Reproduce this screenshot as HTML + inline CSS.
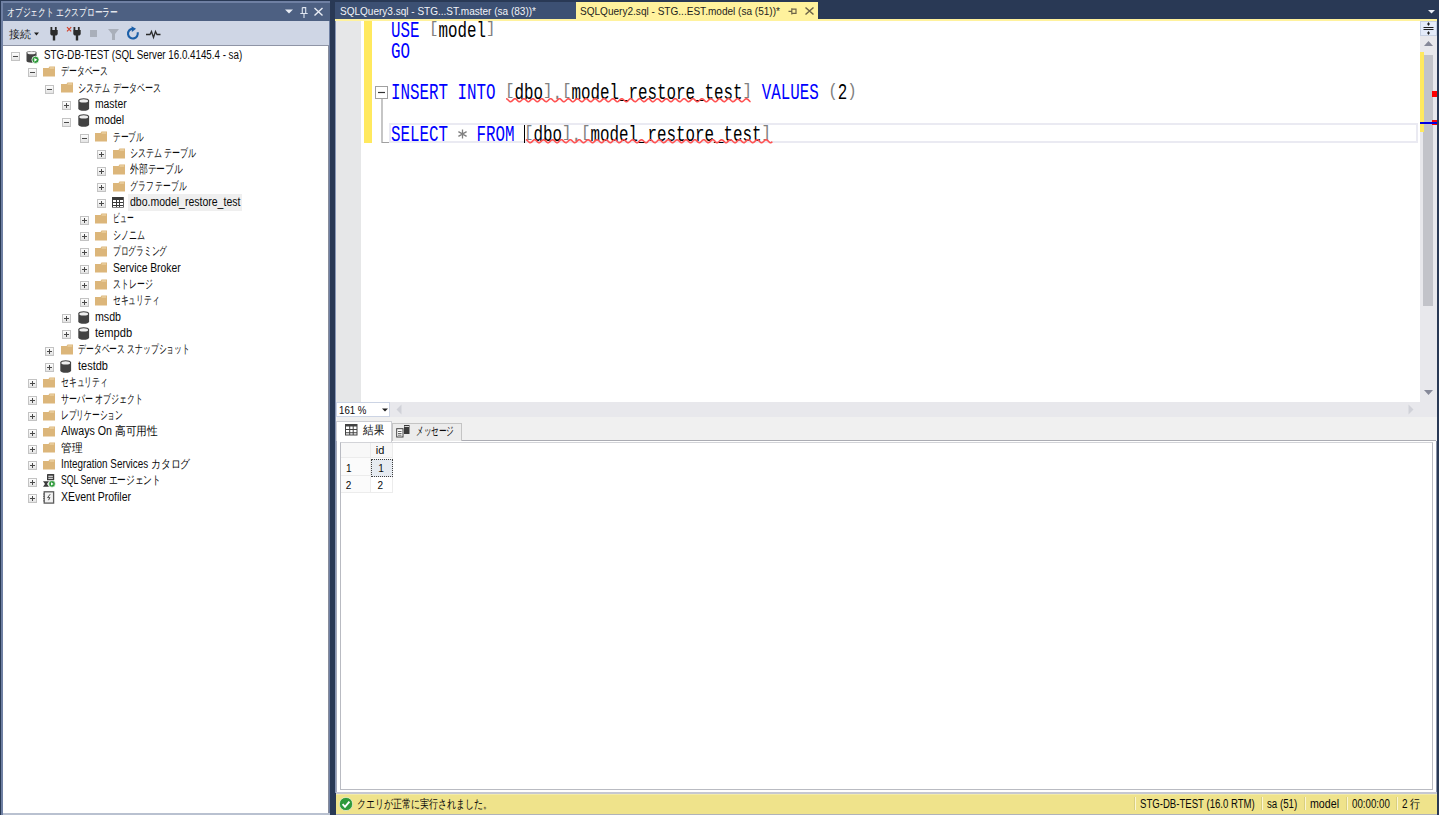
<!DOCTYPE html><html lang="ja"><head><meta charset="utf-8"><title>SSMS</title><style>
*{margin:0;padding:0;box-sizing:border-box}
html,body{width:1439px;height:815px;overflow:hidden}
body{position:relative;background:#293955;font-family:"Liberation Sans",sans-serif;color:#0a0a0a}
.a{position:absolute}
.lbl{position:absolute;white-space:nowrap;font-size:12px;line-height:16px;transform-origin:0 50%}
.code{position:absolute;left:390.5px;white-space:pre;font-family:"Liberation Mono",monospace;font-size:25px;line-height:25px;transform:scale(0.63333,0.9);transform-origin:0 0;color:#000}
.kw{color:#0000ff}.gy{color:#808080}.br{display:inline-block;transform:scaleY(.74);transform-origin:50% 0}.pa{display:inline-block;transform:scaleY(.81);transform-origin:50% 0}
.exp{position:absolute;width:9px;height:9px;border:1px solid #c3c3c3;background:linear-gradient(#fdfdfd,#e4e4e4)}
.exp:before{content:"";position:absolute;left:1px;top:3px;width:5px;height:1px;background:#4a4a4a}
.exp.p:after{content:"";position:absolute;left:3px;top:1px;width:1px;height:5px;background:#4a4a4a}
.sep{position:absolute;top:797px;width:2px;height:13px;border-left:1px solid #d9cf80;border-right:1px solid #fbf6d4}
</style></head><body>
<div class="a" style="left:1px;top:1px;width:329px;height:814px;background:#6f80a3"></div>
<div class="a" style="left:3px;top:3px;width:327px;height:18px;background:#4d6082"></div>
<div class="lbl" id="title" style="left:7px;top:4px;color:#fff;font-size:11px;transform:scaleX(0.7067)">オブジェクト エクスプローラー</div>
<svg class="a" style="left:284px;top:5px" width="42" height="14" viewBox="0 0 42 14"><path d="M1 4.5h8l-4 4z" fill="#e8ecf4"/><path d="M18.3 2.6h3.4v5.6" stroke="#dfe5f0" stroke-width="1.1" fill="none"/><path d="M18.3 2.6v5.6M16.3 8.5h7.4M20 8.5v4.5" stroke="#dfe5f0" stroke-width="1.1" fill="none"/><path d="M30.5 3l8 7.5M38.5 3l-8 7.5" stroke="#e8ecf4" stroke-width="1.4"/></svg>
<div class="a" style="left:3px;top:21px;width:326px;height:24px;background:#cfd6e5"></div>
<div class="a" style="left:3px;top:45px;width:326px;height:1px;background:#8f95a6"></div>
<div class="lbl" style="left:9px;top:26px;font-size:11px;color:#1e1e1e">接続</div>
<svg class="a" style="left:30px;top:26px" width="135" height="16" viewBox="0 0 135 16"><path d="M4 6.5h5l-2.5 3z" fill="#1e1e1e"/><path d="M20.5 1h1.8v3h2.6V1h1.8v3h1v4.2l-1.2 1.3h-1.3v5h-2.4v-5h-1.3l-1.2-1.3V4h0.2z" fill="#2b2b2b"/><path d="M37 1.2l4.2 4.2M41.2 1.2L37 5.4" stroke="#d2402a" stroke-width="1.2"/><path d="M43.5 1h1.8v3h2.6V1h1.8v3h1v4.2l-1.2 1.3h-1.3v5h-2.4v-5h-1.3l-1.2-1.3V4h0.2z" fill="#2b2b2b"/><rect x="60" y="4" width="7" height="7" fill="#a9afba"/><path d="M78 3h11l-4 5v6h-3V8z" fill="#a9afba"/><path d="M107.6 6.2A4.9 4.9 0 1 1 102.6 2.7" stroke="#1b5fa8" stroke-width="2.1" fill="none"/><path d="M101.5 0.2l4.6 2.6-4.2 3.2z" fill="#1b5fa8"/><path d="M116 8.5h4l1.5-3 2 6 2-6 1.5 3h3.5" stroke="#2b2b2b" stroke-width="1.3" fill="none"/></svg>
<div class="a" style="left:3px;top:46px;width:325px;height:767px;background:#fff"></div>
<div class="a" style="left:328px;top:46px;width:1px;height:769px;background:#868b9b"></div>
<div class="a" style="left:3px;top:813px;width:327px;height:2px;background:#b9c1d0"></div>
<div class="exp" style="left:10.5px;top:52.0px"></div>
<svg class="a" style="left:26.0px;top:49.5px" width="14" height="14" viewBox="0 0 14 14"><path d="M0.5 2.5C0.5 0.5 10.5 0.5 10.5 2.5V11C10.5 13.2 0.5 13.2 0.5 11z" fill="#424242"/><ellipse cx="5.5" cy="2.7" rx="4.2" ry="1.5" fill="#efefef"/><circle cx="9.5" cy="9.8" r="3.6" fill="#2e9a3a" stroke="#fff" stroke-width="0.8"/><path d="M8.3 7.9v3.8l3-1.9z" fill="#fff"/></svg>
<div class="lbl" id="t0" style="left:43.5px;top:46.7px;transform:scaleX(0.8142)">STG-DB-TEST (SQL Server 16.0.4145.4 - sa)</div>
<div class="exp" style="left:27.8px;top:68.4px"></div>
<svg class="a" style="left:43.3px;top:65.9px" width="13" height="11" viewBox="0 0 13 11"><path d="M0 2h5.5l1-1.5h5.5v10H0z" fill="#dcb67a"/><path d="M6.8 1.6h4.4v0.9H6.5z" fill="#f1dcb2"/></svg>
<div class="lbl" id="t1" style="left:60.8px;top:63.1px;transform:scaleX(0.6556)">データベース</div>
<div class="exp" style="left:45.1px;top:84.7px"></div>
<svg class="a" style="left:60.6px;top:82.2px" width="13" height="11" viewBox="0 0 13 11"><path d="M0 2h5.5l1-1.5h5.5v10H0z" fill="#dcb67a"/><path d="M6.8 1.6h4.4v0.9H6.5z" fill="#f1dcb2"/></svg>
<div class="lbl" id="t2" style="left:78.1px;top:79.5px;transform:scaleX(0.6753)">システム データベース</div>
<div class="exp p" style="left:62.4px;top:101.1px"></div>
<svg class="a" style="left:77.6px;top:98.0px" width="12" height="13" viewBox="0 0 12 13"><path d="M0.3 2.6C0.3 -0.5 11.1 -0.5 11.1 2.6V10.4C11.1 13.5 0.3 13.5 0.3 10.4z" fill="#424242"/><ellipse cx="5.7" cy="2.9" rx="4.4" ry="1.7" fill="#efefef"/></svg>
<div class="lbl" id="t3" style="left:95.4px;top:95.8px;transform:scaleX(0.8613)">master</div>
<div class="exp" style="left:62.4px;top:117.5px"></div>
<svg class="a" style="left:77.6px;top:114.4px" width="12" height="13" viewBox="0 0 12 13"><path d="M0.3 2.6C0.3 -0.5 11.1 -0.5 11.1 2.6V10.4C11.1 13.5 0.3 13.5 0.3 10.4z" fill="#424242"/><ellipse cx="5.7" cy="2.9" rx="4.4" ry="1.7" fill="#efefef"/></svg>
<div class="lbl" id="t4" style="left:95.4px;top:112.2px;transform:scaleX(0.8933)">model</div>
<div class="exp" style="left:79.7px;top:133.9px"></div>
<svg class="a" style="left:95.2px;top:131.4px" width="13" height="11" viewBox="0 0 13 11"><path d="M0 2h5.5l1-1.5h5.5v10H0z" fill="#dcb67a"/><path d="M6.8 1.6h4.4v0.9H6.5z" fill="#f1dcb2"/></svg>
<div class="lbl" id="t5" style="left:112.7px;top:128.6px;transform:scaleX(0.6417)">テーブル</div>
<div class="exp p" style="left:97.0px;top:150.2px"></div>
<svg class="a" style="left:112.5px;top:147.7px" width="13" height="11" viewBox="0 0 13 11"><path d="M0 2h5.5l1-1.5h5.5v10H0z" fill="#dcb67a"/><path d="M6.8 1.6h4.4v0.9H6.5z" fill="#f1dcb2"/></svg>
<div class="lbl" id="t6" style="left:130.0px;top:145.0px;transform:scaleX(0.6674)">システム テーブル</div>
<div class="exp p" style="left:97.0px;top:166.6px"></div>
<svg class="a" style="left:112.5px;top:164.1px" width="13" height="11" viewBox="0 0 13 11"><path d="M0 2h5.5l1-1.5h5.5v10H0z" fill="#dcb67a"/><path d="M6.8 1.6h4.4v0.9H6.5z" fill="#f1dcb2"/></svg>
<div class="lbl" id="t7" style="left:130.0px;top:161.3px;transform:scaleX(0.7333)">外部テーブル</div>
<div class="exp p" style="left:97.0px;top:183.0px"></div>
<svg class="a" style="left:112.5px;top:180.5px" width="13" height="11" viewBox="0 0 13 11"><path d="M0 2h5.5l1-1.5h5.5v10H0z" fill="#dcb67a"/><path d="M6.8 1.6h4.4v0.9H6.5z" fill="#f1dcb2"/></svg>
<div class="lbl" id="t8" style="left:130.0px;top:177.7px;transform:scaleX(0.6469)">グラフ テーブル</div>
<div class="exp p" style="left:97.0px;top:199.3px"></div>
<svg class="a" style="left:111.9px;top:197.3px" width="12" height="11" viewBox="0 0 12 11"><rect x="0" y="0" width="11.8" height="10.6" fill="#3a3a3a"/><path d="M1 3h3v2H1zM5 3h2v2H5zM8 3h3v2H8zM1 6h3v2H1zM5 6h2v2H5zM8 6h3v2H8zM1 9h3v1H1zM5 9h2v1H5zM8 9h3v1H8z" fill="#fff"/></svg>
<div class="a" style="left:128.0px;top:193.8px;width:113.6px;height:16.8px;background:#efefef"></div>
<div class="lbl" id="t9" style="left:130.0px;top:194.1px;transform:scaleX(0.8756)">dbo.model_restore_test</div>
<div class="exp p" style="left:79.7px;top:215.7px"></div>
<svg class="a" style="left:95.2px;top:213.2px" width="13" height="11" viewBox="0 0 13 11"><path d="M0 2h5.5l1-1.5h5.5v10H0z" fill="#dcb67a"/><path d="M6.8 1.6h4.4v0.9H6.5z" fill="#f1dcb2"/></svg>
<div class="lbl" id="t10" style="left:112.7px;top:210.4px;transform:scaleX(0.5639)">ビュー</div>
<div class="exp p" style="left:79.7px;top:232.1px"></div>
<svg class="a" style="left:95.2px;top:229.6px" width="13" height="11" viewBox="0 0 13 11"><path d="M0 2h5.5l1-1.5h5.5v10H0z" fill="#dcb67a"/><path d="M6.8 1.6h4.4v0.9H6.5z" fill="#f1dcb2"/></svg>
<div class="lbl" id="t11" style="left:112.7px;top:226.8px;transform:scaleX(0.6667)">シノニム</div>
<div class="exp p" style="left:79.7px;top:248.4px"></div>
<svg class="a" style="left:95.2px;top:245.9px" width="13" height="11" viewBox="0 0 13 11"><path d="M0 2h5.5l1-1.5h5.5v10H0z" fill="#dcb67a"/><path d="M6.8 1.6h4.4v0.9H6.5z" fill="#f1dcb2"/></svg>
<div class="lbl" id="t12" style="left:112.7px;top:243.2px;transform:scaleX(0.644)">プログラミング</div>
<div class="exp p" style="left:79.7px;top:264.8px"></div>
<svg class="a" style="left:95.2px;top:262.3px" width="13" height="11" viewBox="0 0 13 11"><path d="M0 2h5.5l1-1.5h5.5v10H0z" fill="#dcb67a"/><path d="M6.8 1.6h4.4v0.9H6.5z" fill="#f1dcb2"/></svg>
<div class="lbl" id="t13" style="left:112.7px;top:259.6px;transform:scaleX(0.8589)">Service Broker</div>
<div class="exp p" style="left:79.7px;top:281.2px"></div>
<svg class="a" style="left:95.2px;top:278.7px" width="13" height="11" viewBox="0 0 13 11"><path d="M0 2h5.5l1-1.5h5.5v10H0z" fill="#dcb67a"/><path d="M6.8 1.6h4.4v0.9H6.5z" fill="#f1dcb2"/></svg>
<div class="lbl" id="t14" style="left:112.7px;top:275.9px;transform:scaleX(0.6567)">ストレージ</div>
<div class="exp p" style="left:79.7px;top:297.6px"></div>
<svg class="a" style="left:95.2px;top:295.1px" width="13" height="11" viewBox="0 0 13 11"><path d="M0 2h5.5l1-1.5h5.5v10H0z" fill="#dcb67a"/><path d="M6.8 1.6h4.4v0.9H6.5z" fill="#f1dcb2"/></svg>
<div class="lbl" id="t15" style="left:112.7px;top:292.3px;transform:scaleX(0.6431)">セキュリティ</div>
<div class="exp p" style="left:62.4px;top:313.9px"></div>
<svg class="a" style="left:77.6px;top:310.8px" width="12" height="13" viewBox="0 0 12 13"><path d="M0.3 2.6C0.3 -0.5 11.1 -0.5 11.1 2.6V10.4C11.1 13.5 0.3 13.5 0.3 10.4z" fill="#424242"/><ellipse cx="5.7" cy="2.9" rx="4.4" ry="1.7" fill="#efefef"/></svg>
<div class="lbl" id="t16" style="left:95.4px;top:308.7px;transform:scaleX(0.886)">msdb</div>
<div class="exp p" style="left:62.4px;top:330.3px"></div>
<svg class="a" style="left:77.6px;top:327.2px" width="12" height="13" viewBox="0 0 12 13"><path d="M0.3 2.6C0.3 -0.5 11.1 -0.5 11.1 2.6V10.4C11.1 13.5 0.3 13.5 0.3 10.4z" fill="#424242"/><ellipse cx="5.7" cy="2.9" rx="4.4" ry="1.7" fill="#efefef"/></svg>
<div class="lbl" id="t17" style="left:95.4px;top:325.0px;transform:scaleX(0.9268)">tempdb</div>
<div class="exp p" style="left:45.1px;top:346.7px"></div>
<svg class="a" style="left:60.6px;top:344.2px" width="13" height="11" viewBox="0 0 13 11"><path d="M0 2h5.5l1-1.5h5.5v10H0z" fill="#dcb67a"/><path d="M6.8 1.6h4.4v0.9H6.5z" fill="#f1dcb2"/></svg>
<div class="lbl" id="t18" style="left:78.1px;top:341.4px;transform:scaleX(0.6537)">データベース スナップショット</div>
<div class="exp p" style="left:45.1px;top:363.0px"></div>
<svg class="a" style="left:60.3px;top:359.9px" width="12" height="13" viewBox="0 0 12 13"><path d="M0.3 2.6C0.3 -0.5 11.1 -0.5 11.1 2.6V10.4C11.1 13.5 0.3 13.5 0.3 10.4z" fill="#424242"/><ellipse cx="5.7" cy="2.9" rx="4.4" ry="1.7" fill="#efefef"/></svg>
<div class="lbl" id="t19" style="left:78.1px;top:357.8px;transform:scaleX(0.9143)">testdb</div>
<div class="exp p" style="left:27.8px;top:379.4px"></div>
<svg class="a" style="left:43.3px;top:376.9px" width="13" height="11" viewBox="0 0 13 11"><path d="M0 2h5.5l1-1.5h5.5v10H0z" fill="#dcb67a"/><path d="M6.8 1.6h4.4v0.9H6.5z" fill="#f1dcb2"/></svg>
<div class="lbl" id="t20" style="left:60.8px;top:374.1px;transform:scaleX(0.6486)">セキュリティ</div>
<div class="exp p" style="left:27.8px;top:395.8px"></div>
<svg class="a" style="left:43.3px;top:393.3px" width="13" height="11" viewBox="0 0 13 11"><path d="M0 2h5.5l1-1.5h5.5v10H0z" fill="#dcb67a"/><path d="M6.8 1.6h4.4v0.9H6.5z" fill="#f1dcb2"/></svg>
<div class="lbl" id="t21" style="left:60.8px;top:390.5px;transform:scaleX(0.6648)">サーバー オブジェクト</div>
<div class="exp p" style="left:27.8px;top:412.1px"></div>
<svg class="a" style="left:43.3px;top:409.6px" width="13" height="11" viewBox="0 0 13 11"><path d="M0 2h5.5l1-1.5h5.5v10H0z" fill="#dcb67a"/><path d="M6.8 1.6h4.4v0.9H6.5z" fill="#f1dcb2"/></svg>
<div class="lbl" id="t22" style="left:60.8px;top:406.9px;transform:scaleX(0.6448)">レプリケーション</div>
<div class="exp p" style="left:27.8px;top:428.5px"></div>
<svg class="a" style="left:43.3px;top:426.0px" width="13" height="11" viewBox="0 0 13 11"><path d="M0 2h5.5l1-1.5h5.5v10H0z" fill="#dcb67a"/><path d="M6.8 1.6h4.4v0.9H6.5z" fill="#f1dcb2"/></svg>
<div class="lbl" id="t23" style="left:60.8px;top:423.3px;transform:scaleX(0.8897)">Always On 高可用性</div>
<div class="exp p" style="left:27.8px;top:444.9px"></div>
<svg class="a" style="left:43.3px;top:442.4px" width="13" height="11" viewBox="0 0 13 11"><path d="M0 2h5.5l1-1.5h5.5v10H0z" fill="#dcb67a"/><path d="M6.8 1.6h4.4v0.9H6.5z" fill="#f1dcb2"/></svg>
<div class="lbl" id="t24" style="left:60.8px;top:439.6px;transform:scaleX(0.8917)">管理</div>
<div class="exp p" style="left:27.8px;top:461.2px"></div>
<svg class="a" style="left:43.3px;top:458.8px" width="13" height="11" viewBox="0 0 13 11"><path d="M0 2h5.5l1-1.5h5.5v10H0z" fill="#dcb67a"/><path d="M6.8 1.6h4.4v0.9H6.5z" fill="#f1dcb2"/></svg>
<div class="lbl" id="t25" style="left:60.8px;top:456.0px;transform:scaleX(0.8215)">Integration Services カタログ</div>
<div class="exp p" style="left:27.8px;top:477.6px"></div>
<svg class="a" style="left:42.8px;top:474.1px" width="14" height="14" viewBox="0 0 14 14"><rect x="4" y="0" width="7.2" height="6.3" rx="0.6" fill="#3c3c3c"/><path d="M5.3 1.7h4.6v1.1H5.3zM5.3 3.7h4.6v1.1H5.3z" fill="#fff"/><path d="M0 7.3h6l-2 2.6 2 2.8H0l2-2.8z" fill="#3c3c3c"/><circle cx="9" cy="9.9" r="3.3" fill="#2e9a3a" stroke="#fff" stroke-width="0.6"/><path d="M8 8.3v3.2l2.6-1.6z" fill="#fff"/></svg>
<div class="lbl" id="t26" style="left:60.8px;top:472.4px;transform:scaleX(0.7261)">SQL Server エージェント</div>
<div class="exp p" style="left:27.8px;top:494.0px"></div>
<svg class="a" style="left:43.1px;top:490.5px" width="12" height="13" viewBox="0 0 12 13"><rect x="1.2" y="0.8" width="9.4" height="11.3" fill="#f2f2f2" stroke="#5c5c5c" stroke-width="1.3"/><path d="M0 3h1.8M0 5.3h1.8M0 7.6h1.8M0 9.9h1.8" stroke="#5c5c5c" stroke-width="0.9"/><path d="M7.2 3.2L4.6 6.6h2.3l-1.4 2.6" stroke="#404040" stroke-width="0.9" fill="none"/></svg>
<div class="lbl" id="t27" style="left:60.8px;top:488.7px;transform:scaleX(0.8745)">XEvent Profiler</div>
<div class="a" style="left:335px;top:2px;width:240.5px;height:17px;background:#3c5073"></div>
<div class="lbl" id="tab1" style="left:340px;top:3px;font-size:11px;color:#f1f3f8;transform:scaleX(0.9109)">SQLQuery3.sql - STG...ST.master (sa (83))*</div>
<div class="a" style="left:575.5px;top:2px;width:242.5px;height:17px;background:#fff29d"></div>
<div class="lbl" id="tab2" style="left:579.6px;top:3px;font-size:11px;color:#1e1e1e;transform:scaleX(0.9138)">SQLQuery2.sql - STG...EST.model (sa (51))*</div>
<svg class="a" style="left:786px;top:4px" width="32" height="14" viewBox="0 0 32 14"><path d="M2.5 7.3h3M5.8 4.2v6.2M5.8 5.2h4.2v4.2H5.8" stroke="#6d6448" fill="none" stroke-width="1.2"/><path d="M19.5 3.5l8 7M27.5 3.5l-8 7" stroke="#6d6448" stroke-width="1.5"/></svg>
<svg class="a" style="left:1427px;top:8px" width="10" height="8" viewBox="0 0 10 8"><path d="M1 2h7l-3.5 3.5z" fill="#e8ecf4"/></svg>
<div class="a" style="left:335px;top:19px;width:1102.5px;height:2px;background:#fff29d"></div>
<div class="a" style="left:335px;top:21px;width:1102px;height:380.5px;background:#fff"></div>
<div class="a" style="left:335px;top:21px;width:1px;height:772px;background:#8a98b6"></div>
<div class="a" style="left:336px;top:21px;width:24.8px;height:380.5px;background:#e6e7e8"></div>
<div class="a" style="left:364.4px;top:21px;width:7.4px;height:122.2px;background:#ffe95e"></div>
<div class="a" style="left:389px;top:123px;width:1029px;height:20px;border:2px solid #eaeaf2;border-right-width:2px"></div>
<svg class="a" style="left:374px;top:85px" width="16" height="60" viewBox="0 0 16 60"><rect x="1.5" y="1.5" width="12" height="12" fill="#fff" stroke="#a0a0a0"/><path d="M4 7.5h7" stroke="#333" stroke-width="1.2"/><path d="M8 14v43.5h7" stroke="#a0a0a0" stroke-width="1.2" fill="none"/></svg>
<div class="code" style="top:20.2px"><span class="kw">USE</span> <span class="gy br">[</span>model<span class="gy br">]</span></div>
<div class="code" style="top:40.9px"><span class="kw">GO</span></div>
<div class="code" style="top:82.2px"><span class="kw">INSERT</span> <span class="kw">INTO</span> <span class="gy br">[</span>dbo<span class="gy br">]</span><span class="gy">.</span><span class="gy br">[</span>model_restore_test<span class="gy br">]</span> <span class="kw">VALUES</span> <span class="gy pa">(</span>2<span class="gy pa">)</span></div>
<div class="code" style="top:123.5px"><span class="kw">SELECT</span>   <span class="kw">FROM</span> <span class="gy br">[</span>dbo<span class="gy br">]</span><span class="gy">.</span><span class="gy br">[</span>model_restore_test<span class="gy br">]</span></div>
<svg class="a" style="left:457px;top:128.5px" width="11" height="10" viewBox="0 0 11 10"><path d="M5.5 0.5v9M1.4 2.6l8.2 4.8M1.4 7.4l8.2-4.8" stroke="#808080" stroke-width="1.3"/></svg>
<div class="a" style="left:524.2px;top:124.5px;width:1px;height:18.5px;background:#000"></div>
<svg class="a" style="left:0;top:0" width="1439" height="815" viewBox="0 0 1439 815"><path d="M506.10 98.70 L506.60 98.79 L507.10 99.06 L507.60 99.47 L508.10 99.96 L508.60 100.49 L509.10 100.98 L509.60 101.38 L510.10 101.62 L510.60 101.70 L511.10 101.59 L511.60 101.31 L512.10 100.89 L512.60 100.38 L513.10 99.86 L513.60 99.37 L514.10 98.99 L514.60 98.76 L515.10 98.70 L515.60 98.83 L516.10 99.13 L516.60 99.56 L517.10 100.07 L517.60 100.59 L518.10 101.07 L518.60 101.44 L519.10 101.65 L519.60 101.69 L520.10 101.54 L520.60 101.23 L521.10 100.79 L521.60 100.28 L522.10 99.76 L522.60 99.29 L523.10 98.93 L523.60 98.73 L524.10 98.71 L524.60 98.88 L525.10 99.21 L525.60 99.66 L526.10 100.17 L526.60 100.69 L527.10 101.15 L527.60 101.49 L528.10 101.68 L528.60 101.68 L529.10 101.49 L529.60 101.15 L530.10 100.69 L530.60 100.17 L531.10 99.66 L531.60 99.21 L532.10 98.88 L532.60 98.71 L533.10 98.73 L533.60 98.93 L534.10 99.29 L534.60 99.76 L535.10 100.28 L535.60 100.79 L536.10 101.23 L536.60 101.54 L537.10 101.69 L537.60 101.65 L538.10 101.44 L538.60 101.07 L539.10 100.59 L539.60 100.07 L540.10 99.56 L540.60 99.13 L541.10 98.83 L541.60 98.70 L542.10 98.76 L542.60 98.99 L543.10 99.37 L543.60 99.86 L544.10 100.38 L544.60 100.89 L545.10 101.31 L545.60 101.59 L546.10 101.70 L546.60 101.62 L547.10 101.38 L547.60 100.98 L548.10 100.49 L548.60 99.96 L549.10 99.47 L549.60 99.06 L550.10 98.79 L550.60 98.70 L551.10 98.79 L551.60 99.06 L552.10 99.47 L552.60 99.96 L553.10 100.49 L553.60 100.98 L554.10 101.38 L554.60 101.62 L555.10 101.70 L555.60 101.59 L556.10 101.31 L556.60 100.89 L557.10 100.38 L557.60 99.86 L558.10 99.37 L558.60 98.99 L559.10 98.76 L559.60 98.70 L560.10 98.83 L560.60 99.13 L561.10 99.56 L561.60 100.07 L562.10 100.59 L562.60 101.07 L563.10 101.44 L563.60 101.65 L564.10 101.69 L564.60 101.54 L565.10 101.23 L565.60 100.79 L566.10 100.28 L566.60 99.76 L567.10 99.29 L567.60 98.93 L568.10 98.73 L568.60 98.71 L569.10 98.88 L569.60 99.21 L570.10 99.66 L570.60 100.17 L571.10 100.69 L571.60 101.15 L572.10 101.49 L572.60 101.68 L573.10 101.68 L573.60 101.49 L574.10 101.15 L574.60 100.69 L575.10 100.17 L575.60 99.66 L576.10 99.21 L576.60 98.88 L577.10 98.71 L577.60 98.73 L578.10 98.93 L578.60 99.29 L579.10 99.76 L579.60 100.28 L580.10 100.79 L580.60 101.23 L581.10 101.54 L581.60 101.69 L582.10 101.65 L582.60 101.44 L583.10 101.07 L583.60 100.59 L584.10 100.07 L584.60 99.56 L585.10 99.13 L585.60 98.83 L586.10 98.70 L586.60 98.76 L587.10 98.99 L587.60 99.37 L588.10 99.86 L588.60 100.38 L589.10 100.89 L589.60 101.31 L590.10 101.59 L590.60 101.70 L591.10 101.62 L591.60 101.38 L592.10 100.98 L592.60 100.49 L593.10 99.96 L593.60 99.47 L594.10 99.06 L594.60 98.79 L595.10 98.70 L595.60 98.79 L596.10 99.06 L596.60 99.47 L597.10 99.96 L597.60 100.49 L598.10 100.98 L598.60 101.38 L599.10 101.62 L599.60 101.70 L600.10 101.59 L600.60 101.31 L601.10 100.89 L601.60 100.38 L602.10 99.86 L602.60 99.37 L603.10 98.99 L603.60 98.76 L604.10 98.70 L604.60 98.83 L605.10 99.13 L605.60 99.56 L606.10 100.07 L606.60 100.59 L607.10 101.07 L607.60 101.44 L608.10 101.65 L608.60 101.69 L609.10 101.54 L609.60 101.23 L610.10 100.79 L610.60 100.28 L611.10 99.76 L611.60 99.29 L612.10 98.93 L612.60 98.73 L613.10 98.71 L613.60 98.88 L614.10 99.21 L614.60 99.66 L615.10 100.17 L615.60 100.69 L616.10 101.15 L616.60 101.49 L617.10 101.68 L617.60 101.68 L618.10 101.49 L618.60 101.15 L619.10 100.69 L619.60 100.17 L620.10 99.66 L620.60 99.21 L621.10 98.88 L621.60 98.71 L622.10 98.73 L622.60 98.93 L623.10 99.29 L623.60 99.76 L624.10 100.28 L624.60 100.79 L625.10 101.23 L625.60 101.54 L626.10 101.69 L626.60 101.65 L627.10 101.44 L627.60 101.07 L628.10 100.59 L628.60 100.07 L629.10 99.56 L629.60 99.13 L630.10 98.83 L630.60 98.70 L631.10 98.76 L631.60 98.99 L632.10 99.37 L632.60 99.86 L633.10 100.38 L633.60 100.89 L634.10 101.31 L634.60 101.59 L635.10 101.70 L635.60 101.62 L636.10 101.38 L636.60 100.98 L637.10 100.49 L637.60 99.96 L638.10 99.47 L638.60 99.06 L639.10 98.79 L639.60 98.70 L640.10 98.79 L640.60 99.06 L641.10 99.47 L641.60 99.96 L642.10 100.49 L642.60 100.98 L643.10 101.38 L643.60 101.62 L644.10 101.70 L644.60 101.59 L645.10 101.31 L645.60 100.89 L646.10 100.38 L646.60 99.86 L647.10 99.37 L647.60 98.99 L648.10 98.76 L648.60 98.70 L649.10 98.83 L649.60 99.13 L650.10 99.56 L650.60 100.07 L651.10 100.59 L651.60 101.07 L652.10 101.44 L652.60 101.65 L653.10 101.69 L653.60 101.54 L654.10 101.23 L654.60 100.79 L655.10 100.28 L655.60 99.76 L656.10 99.29 L656.60 98.93 L657.10 98.73 L657.60 98.71 L658.10 98.88 L658.60 99.21 L659.10 99.66 L659.60 100.17 L660.10 100.69 L660.60 101.15 L661.10 101.49 L661.60 101.68 L662.10 101.68 L662.60 101.49 L663.10 101.15 L663.60 100.69 L664.10 100.17 L664.60 99.66 L665.10 99.21 L665.60 98.88 L666.10 98.71 L666.60 98.73 L667.10 98.93 L667.60 99.29 L668.10 99.76 L668.60 100.28 L669.10 100.79 L669.60 101.23 L670.10 101.54 L670.60 101.69 L671.10 101.65 L671.60 101.44 L672.10 101.07 L672.60 100.59 L673.10 100.07 L673.60 99.56 L674.10 99.13 L674.60 98.83 L675.10 98.70 L675.60 98.76 L676.10 98.99 L676.60 99.37 L677.10 99.86 L677.60 100.38 L678.10 100.89 L678.60 101.31 L679.10 101.59 L679.60 101.70 L680.10 101.62 L680.60 101.38 L681.10 100.98 L681.60 100.49 L682.10 99.96 L682.60 99.47 L683.10 99.06 L683.60 98.79 L684.10 98.70 L684.60 98.79 L685.10 99.06 L685.60 99.47 L686.10 99.96 L686.60 100.49 L687.10 100.98 L687.60 101.38 L688.10 101.62 L688.60 101.70 L689.10 101.59 L689.60 101.31 L690.10 100.89 L690.60 100.38 L691.10 99.86 L691.60 99.37 L692.10 98.99 L692.60 98.76 L693.10 98.70 L693.60 98.83 L694.10 99.13 L694.60 99.56 L695.10 100.07 L695.60 100.59 L696.10 101.07 L696.60 101.44 L697.10 101.65 L697.60 101.69 L698.10 101.54 L698.60 101.23 L699.10 100.79 L699.60 100.28 L700.10 99.76 L700.60 99.29 L701.10 98.93 L701.60 98.73 L702.10 98.71 L702.60 98.88 L703.10 99.21 L703.60 99.66 L704.10 100.17 L704.60 100.69 L705.10 101.15 L705.60 101.49 L706.10 101.68 L706.60 101.68 L707.10 101.49 L707.60 101.15 L708.10 100.69 L708.60 100.17 L709.10 99.66 L709.60 99.21 L710.10 98.88 L710.60 98.71 L711.10 98.73 L711.60 98.93 L712.10 99.29 L712.60 99.76 L713.10 100.28 L713.60 100.79 L714.10 101.23 L714.60 101.54 L715.10 101.69 L715.60 101.65 L716.10 101.44 L716.60 101.07 L717.10 100.59 L717.60 100.07 L718.10 99.56 L718.60 99.13 L719.10 98.83 L719.60 98.70 L720.10 98.76 L720.60 98.99 L721.10 99.37 L721.60 99.86 L722.10 100.38 L722.60 100.89 L723.10 101.31 L723.60 101.59 L724.10 101.70 L724.60 101.62 L725.10 101.38 L725.60 100.98 L726.10 100.49 L726.60 99.96 L727.10 99.47 L727.60 99.06 L728.10 98.79 L728.60 98.70 L729.10 98.79 L729.60 99.06 L730.10 99.47 L730.60 99.96 L731.10 100.49 L731.60 100.98 L732.10 101.38 L732.60 101.62 L733.10 101.70 L733.60 101.59 L734.10 101.31 L734.60 100.89 L735.10 100.38 L735.60 99.86 L736.10 99.37 L736.60 98.99 L737.10 98.76 L737.60 98.70 L738.10 98.83 L738.60 99.13 L739.10 99.56 L739.60 100.07 L740.10 100.59 L740.60 101.07 L741.10 101.44 L741.60 101.65 L742.10 101.69 L742.60 101.54 L743.10 101.23 L743.60 100.79 L744.10 100.28 L744.60 99.76 L745.10 99.29 L745.60 98.93 L746.10 98.73 L746.60 98.71 L747.10 98.88 L747.60 99.21 L748.10 99.66 L748.60 100.17 L749.10 100.69 L749.60 101.15 L750.10 101.49 L750.60 101.68" stroke="#ff5252" stroke-width="1.6" fill="none"/></svg>
<svg class="a" style="left:0;top:0" width="1439" height="815" viewBox="0 0 1439 815"><path d="M525.80 139.70 L526.30 139.79 L526.80 140.06 L527.30 140.47 L527.80 140.96 L528.30 141.49 L528.80 141.98 L529.30 142.38 L529.80 142.62 L530.30 142.70 L530.80 142.59 L531.30 142.31 L531.80 141.89 L532.30 141.38 L532.80 140.86 L533.30 140.37 L533.80 139.99 L534.30 139.76 L534.80 139.70 L535.30 139.83 L535.80 140.13 L536.30 140.56 L536.80 141.07 L537.30 141.59 L537.80 142.07 L538.30 142.44 L538.80 142.65 L539.30 142.69 L539.80 142.54 L540.30 142.23 L540.80 141.79 L541.30 141.28 L541.80 140.76 L542.30 140.29 L542.80 139.93 L543.30 139.73 L543.80 139.71 L544.30 139.88 L544.80 140.21 L545.30 140.66 L545.80 141.17 L546.30 141.69 L546.80 142.15 L547.30 142.49 L547.80 142.68 L548.30 142.68 L548.80 142.49 L549.30 142.15 L549.80 141.69 L550.30 141.17 L550.80 140.66 L551.30 140.21 L551.80 139.88 L552.30 139.71 L552.80 139.73 L553.30 139.93 L553.80 140.29 L554.30 140.76 L554.80 141.28 L555.30 141.79 L555.80 142.23 L556.30 142.54 L556.80 142.69 L557.30 142.65 L557.80 142.44 L558.30 142.07 L558.80 141.59 L559.30 141.07 L559.80 140.56 L560.30 140.13 L560.80 139.83 L561.30 139.70 L561.80 139.76 L562.30 139.99 L562.80 140.37 L563.30 140.86 L563.80 141.38 L564.30 141.89 L564.80 142.31 L565.30 142.59 L565.80 142.70 L566.30 142.62 L566.80 142.38 L567.30 141.98 L567.80 141.49 L568.30 140.96 L568.80 140.47 L569.30 140.06 L569.80 139.79 L570.30 139.70 L570.80 139.79 L571.30 140.06 L571.80 140.47 L572.30 140.96 L572.80 141.49 L573.30 141.98 L573.80 142.38 L574.30 142.62 L574.80 142.70 L575.30 142.59 L575.80 142.31 L576.30 141.89 L576.80 141.38 L577.30 140.86 L577.80 140.37 L578.30 139.99 L578.80 139.76 L579.30 139.70 L579.80 139.83 L580.30 140.13 L580.80 140.56 L581.30 141.07 L581.80 141.59 L582.30 142.07 L582.80 142.44 L583.30 142.65 L583.80 142.69 L584.30 142.54 L584.80 142.23 L585.30 141.79 L585.80 141.28 L586.30 140.76 L586.80 140.29 L587.30 139.93 L587.80 139.73 L588.30 139.71 L588.80 139.88 L589.30 140.21 L589.80 140.66 L590.30 141.17 L590.80 141.69 L591.30 142.15 L591.80 142.49 L592.30 142.68 L592.80 142.68 L593.30 142.49 L593.80 142.15 L594.30 141.69 L594.80 141.17 L595.30 140.66 L595.80 140.21 L596.30 139.88 L596.80 139.71 L597.30 139.73 L597.80 139.93 L598.30 140.29 L598.80 140.76 L599.30 141.28 L599.80 141.79 L600.30 142.23 L600.80 142.54 L601.30 142.69 L601.80 142.65 L602.30 142.44 L602.80 142.07 L603.30 141.59 L603.80 141.07 L604.30 140.56 L604.80 140.13 L605.30 139.83 L605.80 139.70 L606.30 139.76 L606.80 139.99 L607.30 140.37 L607.80 140.86 L608.30 141.38 L608.80 141.89 L609.30 142.31 L609.80 142.59 L610.30 142.70 L610.80 142.62 L611.30 142.38 L611.80 141.98 L612.30 141.49 L612.80 140.96 L613.30 140.47 L613.80 140.06 L614.30 139.79 L614.80 139.70 L615.30 139.79 L615.80 140.06 L616.30 140.47 L616.80 140.96 L617.30 141.49 L617.80 141.98 L618.30 142.38 L618.80 142.62 L619.30 142.70 L619.80 142.59 L620.30 142.31 L620.80 141.89 L621.30 141.38 L621.80 140.86 L622.30 140.37 L622.80 139.99 L623.30 139.76 L623.80 139.70 L624.30 139.83 L624.80 140.13 L625.30 140.56 L625.80 141.07 L626.30 141.59 L626.80 142.07 L627.30 142.44 L627.80 142.65 L628.30 142.69 L628.80 142.54 L629.30 142.23 L629.80 141.79 L630.30 141.28 L630.80 140.76 L631.30 140.29 L631.80 139.93 L632.30 139.73 L632.80 139.71 L633.30 139.88 L633.80 140.21 L634.30 140.66 L634.80 141.17 L635.30 141.69 L635.80 142.15 L636.30 142.49 L636.80 142.68 L637.30 142.68 L637.80 142.49 L638.30 142.15 L638.80 141.69 L639.30 141.17 L639.80 140.66 L640.30 140.21 L640.80 139.88 L641.30 139.71 L641.80 139.73 L642.30 139.93 L642.80 140.29 L643.30 140.76 L643.80 141.28 L644.30 141.79 L644.80 142.23 L645.30 142.54 L645.80 142.69 L646.30 142.65 L646.80 142.44 L647.30 142.07 L647.80 141.59 L648.30 141.07 L648.80 140.56 L649.30 140.13 L649.80 139.83 L650.30 139.70 L650.80 139.76 L651.30 139.99 L651.80 140.37 L652.30 140.86 L652.80 141.38 L653.30 141.89 L653.80 142.31 L654.30 142.59 L654.80 142.70 L655.30 142.62 L655.80 142.38 L656.30 141.98 L656.80 141.49 L657.30 140.96 L657.80 140.47 L658.30 140.06 L658.80 139.79 L659.30 139.70 L659.80 139.79 L660.30 140.06 L660.80 140.47 L661.30 140.96 L661.80 141.49 L662.30 141.98 L662.80 142.38 L663.30 142.62 L663.80 142.70 L664.30 142.59 L664.80 142.31 L665.30 141.89 L665.80 141.38 L666.30 140.86 L666.80 140.37 L667.30 139.99 L667.80 139.76 L668.30 139.70 L668.80 139.83 L669.30 140.13 L669.80 140.56 L670.30 141.07 L670.80 141.59 L671.30 142.07 L671.80 142.44 L672.30 142.65 L672.80 142.69 L673.30 142.54 L673.80 142.23 L674.30 141.79 L674.80 141.28 L675.30 140.76 L675.80 140.29 L676.30 139.93 L676.80 139.73 L677.30 139.71 L677.80 139.88 L678.30 140.21 L678.80 140.66 L679.30 141.17 L679.80 141.69 L680.30 142.15 L680.80 142.49 L681.30 142.68 L681.80 142.68 L682.30 142.49 L682.80 142.15 L683.30 141.69 L683.80 141.17 L684.30 140.66 L684.80 140.21 L685.30 139.88 L685.80 139.71 L686.30 139.73 L686.80 139.93 L687.30 140.29 L687.80 140.76 L688.30 141.28 L688.80 141.79 L689.30 142.23 L689.80 142.54 L690.30 142.69 L690.80 142.65 L691.30 142.44 L691.80 142.07 L692.30 141.59 L692.80 141.07 L693.30 140.56 L693.80 140.13 L694.30 139.83 L694.80 139.70 L695.30 139.76 L695.80 139.99 L696.30 140.37 L696.80 140.86 L697.30 141.38 L697.80 141.89 L698.30 142.31 L698.80 142.59 L699.30 142.70 L699.80 142.62 L700.30 142.38 L700.80 141.98 L701.30 141.49 L701.80 140.96 L702.30 140.47 L702.80 140.06 L703.30 139.79 L703.80 139.70 L704.30 139.79 L704.80 140.06 L705.30 140.47 L705.80 140.96 L706.30 141.49 L706.80 141.98 L707.30 142.38 L707.80 142.62 L708.30 142.70 L708.80 142.59 L709.30 142.31 L709.80 141.89 L710.30 141.38 L710.80 140.86 L711.30 140.37 L711.80 139.99 L712.30 139.76 L712.80 139.70 L713.30 139.83 L713.80 140.13 L714.30 140.56 L714.80 141.07 L715.30 141.59 L715.80 142.07 L716.30 142.44 L716.80 142.65 L717.30 142.69 L717.80 142.54 L718.30 142.23 L718.80 141.79 L719.30 141.28 L719.80 140.76 L720.30 140.29 L720.80 139.93 L721.30 139.73 L721.80 139.71 L722.30 139.88 L722.80 140.21 L723.30 140.66 L723.80 141.17 L724.30 141.69 L724.80 142.15 L725.30 142.49 L725.80 142.68 L726.30 142.68 L726.80 142.49 L727.30 142.15 L727.80 141.69 L728.30 141.17 L728.80 140.66 L729.30 140.21 L729.80 139.88 L730.30 139.71 L730.80 139.73 L731.30 139.93 L731.80 140.29 L732.30 140.76 L732.80 141.28 L733.30 141.79 L733.80 142.23 L734.30 142.54 L734.80 142.69 L735.30 142.65 L735.80 142.44 L736.30 142.07 L736.80 141.59 L737.30 141.07 L737.80 140.56 L738.30 140.13 L738.80 139.83 L739.30 139.70 L739.80 139.76 L740.30 139.99 L740.80 140.37 L741.30 140.86 L741.80 141.38 L742.30 141.89 L742.80 142.31 L743.30 142.59 L743.80 142.70 L744.30 142.62 L744.80 142.38 L745.30 141.98 L745.80 141.49 L746.30 140.96 L746.80 140.47 L747.30 140.06 L747.80 139.79 L748.30 139.70 L748.80 139.79 L749.30 140.06 L749.80 140.47 L750.30 140.96 L750.80 141.49 L751.30 141.98 L751.80 142.38 L752.30 142.62 L752.80 142.70 L753.30 142.59 L753.80 142.31 L754.30 141.89 L754.80 141.38 L755.30 140.86 L755.80 140.37 L756.30 139.99 L756.80 139.76 L757.30 139.70 L757.80 139.83 L758.30 140.13 L758.80 140.56 L759.30 141.07 L759.80 141.59 L760.30 142.07 L760.80 142.44 L761.30 142.65 L761.80 142.69 L762.30 142.54 L762.80 142.23 L763.30 141.79 L763.80 141.28 L764.30 140.76 L764.80 140.29 L765.30 139.93 L765.80 139.73 L766.30 139.71 L766.80 139.88 L767.30 140.21 L767.80 140.66 L768.30 141.17 L768.80 141.69 L769.30 142.15 L769.80 142.49 L770.30 142.68 L770.80 142.68 L771.30 142.49 L771.80 142.15 L772.30 141.69" stroke="#ff5252" stroke-width="1.6" fill="none"/></svg>
<div class="a" style="left:1419.5px;top:21px;width:17.5px;height:380.5px;background:#e8e8ec"></div>
<div class="a" style="left:1419.5px;top:21px;width:17.5px;height:14.5px;background:#e4ebf9;border:1px solid #c6d0e2"></div>
<svg class="a" style="left:1420px;top:21px" width="17" height="15" viewBox="0 0 17 15"><path d="M3.5 6.5h10M3.5 8.5h10" stroke="#1e1e1e" stroke-width="1"/><path d="M8.5 1.5v3M8.5 10.5v3" stroke="#1e1e1e" stroke-width="1"/><circle cx="8.5" cy="3" r="1.2" fill="#1e1e1e"/><circle cx="8.5" cy="12" r="1.2" fill="#1e1e1e"/></svg>
<svg class="a" style="left:1420px;top:38px" width="17" height="10" viewBox="0 0 17 10"><path d="M4 8h9l-4.5-5z" fill="#868999"/></svg>
<div class="a" style="left:1423px;top:55px;width:10px;height:251px;background:#c2c3c9"></div>
<div class="a" style="left:1420.1px;top:51.5px;width:4.1px;height:80px;background:#ffe95e"></div>
<div class="a" style="left:1431.5px;top:91.4px;width:5px;height:5.8px;background:#ff0000"></div>
<div class="a" style="left:1431.5px;top:120px;width:5px;height:5px;background:#ff0000"></div>
<div class="a" style="left:1419.5px;top:121.5px;width:17.5px;height:2px;background:#0000e0"></div>
<svg class="a" style="left:1420px;top:386px" width="17" height="12" viewBox="0 0 17 12"><path d="M4 4h9l-4.5 5z" fill="#868999"/></svg>
<div class="a" style="left:336px;top:401.5px;width:1101px;height:15.5px;background:#e8e8ec"></div>
<div class="a" style="left:336.2px;top:401.7px;width:53.8px;height:15px;background:#fff;border:1px solid #ccd4e4"></div>
<div class="lbl" id="zoom" style="left:338.5px;top:402px;font-size:11px;transform:scaleX(0.8813)">161 %</div>
<svg class="a" style="left:380px;top:405px" width="10" height="8" viewBox="0 0 10 8"><path d="M2 3.5h6l-3 3z" fill="#1e1e1e"/></svg>
<svg class="a" style="left:394px;top:403px" width="10" height="13" viewBox="0 0 10 13"><path d="M7.5 1.5v10l-5-5z" fill="#d0d1d8"/></svg>
<svg class="a" style="left:1406px;top:403px" width="10" height="13" viewBox="0 0 10 13"><path d="M2.5 1.5v10l5-5z" fill="#d0d1d8"/></svg>
<div class="a" style="left:336px;top:417px;width:1101px;height:376px;background:#f0f0f0"></div>
<div class="a" style="left:336px;top:441px;width:1100.5px;height:351px;background:#fff"></div>
<div class="a" style="left:391.9px;top:440px;width:1044.5px;height:1.2px;background:#abacb3"></div>
<div class="a" style="left:336px;top:421.3px;width:55.9px;height:20.3px;background:#fff;border:1px solid #cdced3;border-bottom:none"></div>
<svg class="a" style="left:345px;top:424px" width="13" height="12" viewBox="0 0 13 12"><rect x="0" y="0" width="12.5" height="11.5" fill="#424242"/><path d="M1 2.5h3.2v2.5H1zM5.2 2.5h2.5v2.5H5.2zM8.7 2.5h2.8v2.5H8.7zM1 6h3.2v2.2H1zM5.2 6h2.5v2.2H5.2zM8.7 6h2.8v2.2H8.7zM1 9.2h3.2v1.3H1zM5.2 9.2h2.5v1.3H5.2zM8.7 9.2h2.8v1.3H8.7z" fill="#fff"/></svg>
<div class="lbl" id="rtab1" style="left:363px;top:422px;transform:scaleX(0.875)">結果</div>
<div class="a" style="left:392px;top:422.8px;width:69.7px;height:18px;background:#ececec;border:1.5px solid #c4c4c4;border-bottom:none"></div>
<svg class="a" style="left:396px;top:424px" width="16" height="14" viewBox="0 0 16 14"><rect x="0.7" y="4.7" width="6.3" height="8.3" fill="#fff" stroke="#404040" stroke-width="1"/><path d="M2 7.5h3.5M2 9.5h3.5M2 11.2h3.5" stroke="#404040" stroke-width="0.8"/><rect x="8" y="1" width="5.5" height="9" fill="#3a3a3a"/><path d="M8.5 2.5h4.5" stroke="#fff" stroke-width="0.8"/></svg>
<div class="lbl" id="rtab2" style="left:416px;top:423px;transform:scaleX(0.6333)">メッセージ</div>
<div class="a" style="left:339.6px;top:441.6px;width:1093.8px;height:348.8px;border:1.5px solid #b9bbc2;border-top-color:#d3d4d8"></div>
<div class="a" style="left:1436px;top:441px;width:1px;height:352px;background:#8a93a8"></div>
<div class="a" style="left:336px;top:441px;width:1px;height:351px;background:#a4a9b8"></div>
<div class="a" style="left:341px;top:443px;width:52px;height:15.3px;background:#f8f8f8"></div>
<div class="a" style="left:340.5px;top:458.3px;width:30.5px;height:34.4px;background:#fbfbfb"></div>
<div class="a" style="left:341px;top:443px;width:30px;height:15.3px;border-right:1px solid #ececec;border-bottom:1px solid #ececec"></div>
<div class="a" style="left:371px;top:443px;width:22px;height:15.3px;border-right:1px solid #ececec;border-bottom:1px solid #ececec"></div>
<div class="a" style="left:340.5px;top:458.3px;width:30.5px;height:18.2px;border-right:1px solid #ececec;border-bottom:1px solid #ececec"></div>
<div class="a" style="left:371px;top:458.3px;width:22px;height:18.2px;border-right:1px solid #ececec;border-bottom:1px solid #ececec"></div>
<div class="a" style="left:340.5px;top:476.5px;width:30.5px;height:16.2px;border-right:1px solid #ececec;border-bottom:1px solid #ececec"></div>
<div class="a" style="left:371px;top:476.5px;width:22px;height:16.2px;border-right:1px solid #ececec;border-bottom:1px solid #ececec"></div>
<div class="a" style="left:371px;top:458.5px;width:22px;height:18px;background:#e6ebf1;border:1px dotted #404040"></div>
<div class="lbl" style="left:375.8px;top:442.4px;font-size:11px">id</div>
<div class="lbl" style="left:346px;top:460.9px;font-size:10px">1</div>
<div class="lbl" style="left:378.2px;top:460.6px;font-size:10px">1</div>
<div class="lbl" style="left:345.8px;top:478.2px;font-size:10px">2</div>
<div class="lbl" style="left:377.6px;top:477.8px;font-size:10px">2</div>
<div class="a" style="left:336px;top:792px;width:1100.5px;height:2px;background:#c6c8d2"></div>
<div class="a" style="left:336px;top:794px;width:1100.5px;height:20px;background:#efe38b"></div>
<div class="a" style="left:336px;top:794px;width:1100.5px;height:1px;background:#f3eba8"></div>
<div class="a" style="left:336px;top:814px;width:1100.5px;height:1px;background:#b0b3b8"></div>
<svg class="a" style="left:339px;top:797px" width="14" height="14" viewBox="0 0 14 14"><circle cx="7" cy="7" r="6.6" fill="#2e9a3a" stroke="#f8f8f0" stroke-width="0.6"/><path d="M3.6 7.2l2.4 2.6 4.4-5.2" stroke="#fff" stroke-width="1.9" fill="none"/></svg>
<div class="lbl" id="st0" style="left:357px;top:796.2px;transform:scaleX(0.75)">クエリが正常に実行されました。</div>
<div class="sep" style="left:1133.7px"></div>
<div class="sep" style="left:1260.6px"></div>
<div class="sep" style="left:1304.0px"></div>
<div class="sep" style="left:1345.9px"></div>
<div class="sep" style="left:1395.9px"></div>
<div class="lbl" id="st1" style="left:1139.7px;top:796.2px;transform:scaleX(0.7996)">STG-DB-TEST (16.0 RTM)</div>
<div class="lbl" id="st2" style="left:1266.8px;top:796.2px;transform:scaleX(0.8084)">sa (51)</div>
<div class="lbl" id="st3" style="left:1309.7px;top:796.2px;transform:scaleX(0.8872)">model</div>
<div class="lbl" id="st4" style="left:1351.6px;top:796.2px;transform:scaleX(0.8091)">00:00:00</div>
<div class="lbl" id="st5" style="left:1401.6px;top:796.2px;transform:scaleX(0.8312)">2 行</div>
<div class="a" style="left:1437px;top:0;width:2px;height:815px;background:#293955"></div>
<script>(function(){var F=[["title", 111], ["t0", 198.2], ["t1", 47.2], ["t2", 83.3], ["t3", 31.6], ["t4", 29.2], ["t5", 30.8], ["t6", 66.3], ["t7", 52.8], ["t8", 56.5], ["t9", 110.4], ["t10", 20.3], ["t11", 32.0], ["t12", 54.1], ["t13", 67.6], ["t14", 39.4], ["t15", 46.3], ["t16", 26.0], ["t17", 37.1], ["t18", 112.0], ["t19", 29.9], ["t20", 46.7], ["t21", 82.0], ["t22", 61.9], ["t23", 96.7], ["t24", 21.4], ["t25", 129.3], ["t26", 99.9], ["t27", 70.0], ["tab1", 196], ["tab2", 200.0], ["zoom", 27.5], ["rtab1", 21], ["rtab2", 38], ["st0", 135], ["st1", 114.8], ["st2", 30.2], ["st3", 29.0], ["st4", 37.8], ["st5", 18.3]];for(var k=0;k<F.length;k++){var e=document.getElementById(F[k][0]);if(!e)continue;e.style.transform="none";var w=e.getBoundingClientRect().width;if(w>0){e.style.transform="scaleX("+(F[k][1]/w).toFixed(4)+")";}}})();</script>
</body></html>
